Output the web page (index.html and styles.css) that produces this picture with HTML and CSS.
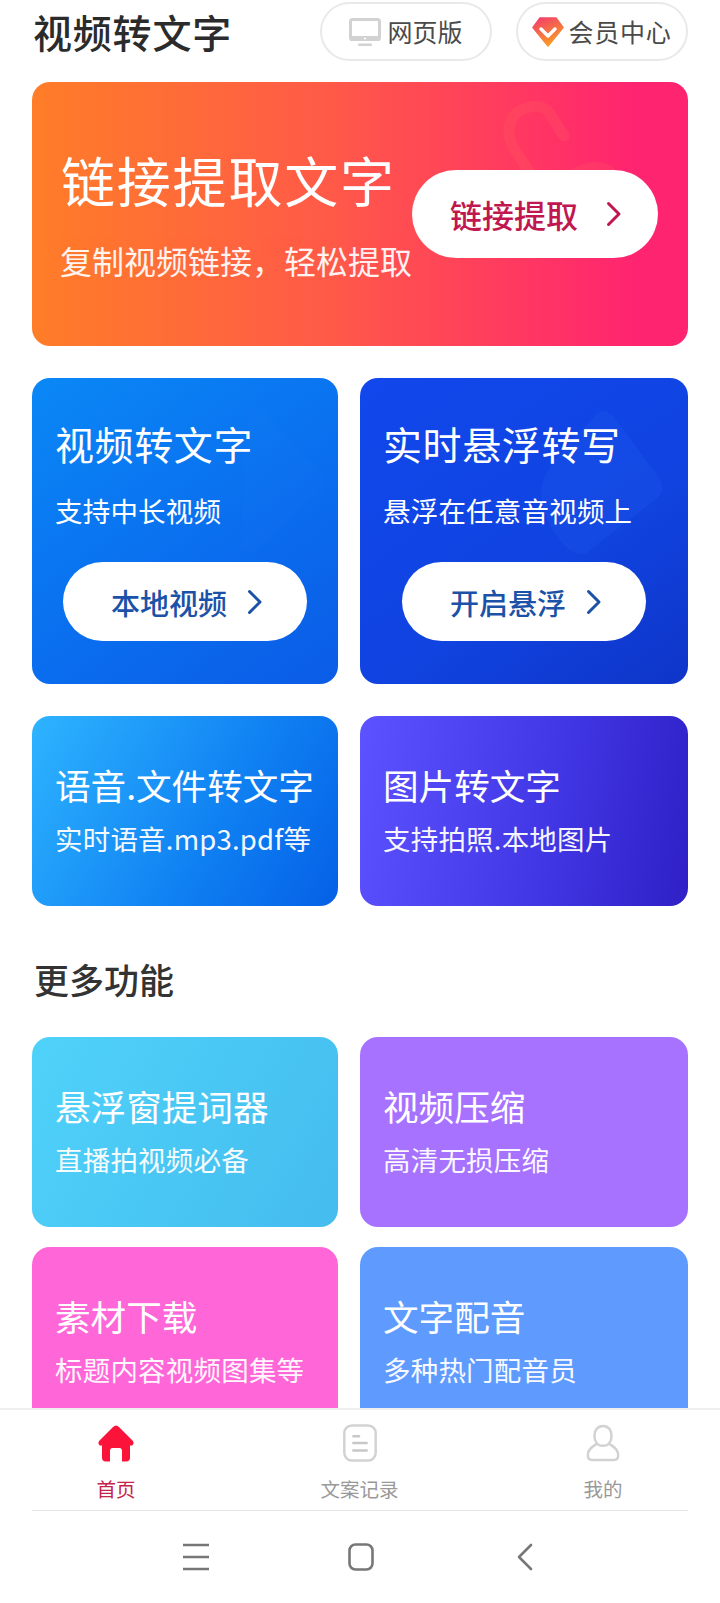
FILE: index.html
```html
<!DOCTYPE html>
<html lang="zh-CN">
<head>
    <meta charset="UTF-8">
    <meta name="viewport" content="width=device-width, initial-scale=1.0">
    <title>视频转文字</title>
    <link rel="stylesheet" href="styles.css">
</head>
<body>
    <div class="app">
        <main class="main">
            <header class="top">
                <h1 class="top-title">视频转文字</h1>
                <div class="top-actions">
                    <div class="top-pill">
                        <svg class="icon-pc" viewBox="0 0 32 28">
                            <rect x="1.5" y="1.5" width="29" height="20" rx="2" fill="#fff" stroke="#d2d2d2" stroke-width="3"/>
                            <rect x="1" y="18" width="30" height="5" rx="1" fill="#d2d2d2"/>
                            <circle cx="16" cy="20.5" r="1.1" fill="#fff"/>
                            <rect x="9" y="25.5" width="14" height="2.5" rx="1" fill="#d2d2d2"/>
                        </svg>
                        <span>网页版</span>
                    </div>
                    <div class="top-pill top-pill-vip">
                        <svg class="icon-vip" viewBox="0 0 32 30">
                            <defs>
                                <linearGradient id="vipFill" x1="0" y1="0" x2="0.5" y2="1">
                                    <stop offset="0" stop-color="#f2386f"/>
                                    <stop offset="1" stop-color="#f99a25"/>
                                </linearGradient>
                            </defs>
                            <path d="M8 1H24L31 10.5 16 29 1 10.5Z" fill="url(#vipFill)" stroke="url(#vipFill)" stroke-width="1.5" stroke-linejoin="round"/>
                            <path d="M9 12L16 19 23 12" fill="none" stroke="#fff" stroke-width="3.4" stroke-linecap="round" stroke-linejoin="round"/>
                        </svg>
                        <span>会员中心</span>
                    </div>
                </div>
            </header>

            <section class="hero">
                <svg class="hero-mark" viewBox="0 0 130 110">
                    <path d="M62 38L48 16C40 4 20 8 12 18C4 28 6 42 14 54L34 84M70 78C84 68 100 66 110 76C118 84 122 94 118 110" fill="none" stroke="#ff8a5a" stroke-opacity="0.12" stroke-width="11" stroke-linecap="round"/>
                </svg>
                <div class="hero-text">
                    <h2 class="hero-title">链接提取文字</h2>
                    <p class="hero-sub">复制视频链接，轻松提取</p>
                </div>
                <div class="pill hero-pill">
                    <span>链接提取</span>
                    <svg class="chevron" viewBox="0 0 16 26"><path d="M2.5 2.5L13 13 2.5 23.5" fill="none" stroke="currentColor" stroke-width="3" stroke-linecap="round" stroke-linejoin="round"/></svg>
                </div>
            </section>

            <section class="grid grid-main">
                <div class="card card-tall card-blue">
                    <svg class="card-mark mark-left" viewBox="0 0 90 150"><path d="M10 8C14 0 24 2 30 10L84 70C90 78 88 86 80 92L20 146C12 152 4 148 4 138Z" fill="#3d8dff" fill-opacity="0.05"/></svg>
                    <h3 class="tall-title">视频转文字</h3>
                    <p class="tall-sub">支持中长视频</p>
                    <div class="pill card-pill">
                        <span>本地视频</span>
                        <svg class="chevron" viewBox="0 0 16 26"><path d="M2.5 2.5L13 13 2.5 23.5" fill="none" stroke="currentColor" stroke-width="3" stroke-linecap="round" stroke-linejoin="round"/></svg>
                    </div>
                </div>
                <div class="card card-tall card-navy">
                    <svg class="card-mark mark-right" viewBox="0 0 130 150"><path d="M60 8C64 0 74 2 80 10L124 70C130 78 128 86 120 92L50 146C30 150 6 110 6 84C6 60 40 30 60 8Z" fill="#3d7bff" fill-opacity="0.1"/></svg>
                    <h3 class="tall-title">实时悬浮转写</h3>
                    <p class="tall-sub">悬浮在任意音视频上</p>
                    <div class="pill card-pill">
                        <span>开启悬浮</span>
                        <svg class="chevron" viewBox="0 0 16 26"><path d="M2.5 2.5L13 13 2.5 23.5" fill="none" stroke="currentColor" stroke-width="3" stroke-linecap="round" stroke-linejoin="round"/></svg>
                    </div>
                </div>
                <div class="card card-small card-sky">
                    <h3 class="small-title">语音.文件转文字</h3>
                    <p class="small-sub">实时语音.mp3.pdf等</p>
                </div>
                <div class="card card-small card-indigo">
                    <h3 class="small-title">图片转文字</h3>
                    <p class="small-sub">支持拍照.本地图片</p>
                </div>
            </section>

            <h2 class="more-title">更多功能</h2>

            <section class="grid grid-more">
                <div class="card card-small card-cyan">
                    <h3 class="small-title">悬浮窗提词器</h3>
                    <p class="small-sub">直播拍视频必备</p>
                </div>
                <div class="card card-small card-purple">
                    <h3 class="small-title">视频压缩</h3>
                    <p class="small-sub">高清无损压缩</p>
                </div>
                <div class="card card-small card-pink">
                    <h3 class="small-title">素材下载</h3>
                    <p class="small-sub">标题内容视频图集等</p>
                </div>
                <div class="card card-small card-periwinkle">
                    <h3 class="small-title">文字配音</h3>
                    <p class="small-sub">多种热门配音员</p>
                </div>
            </section>
        </main>

        <nav class="tabs">
            <div class="tab tab-active">
                <svg class="tab-icon" viewBox="0 0 36 38">
                    <path d="M18 1.5C19 1.5 20 2 21 3L34.5 16.5C36.5 18.5 35.5 21.5 33 21.5H32V34C32 36 30.5 37.5 28.5 37.5H24V27C24 25 23 24 21.5 24H14.5C13 24 12 25 12 27V37.5H7.5C5.5 37.5 4 36 4 34V21.5H3C0.5 21.5 -0.5 18.5 1.5 16.5L15 3C16 2 17 1.5 18 1.5Z" fill="#fb1339"/>
                </svg>
                <span>首页</span>
            </div>
            <div class="tab">
                <svg class="tab-icon" viewBox="0 0 36 40">
                    <rect x="1.5" y="1.5" width="33" height="37" rx="8" fill="none" stroke="#d2d2d2" stroke-width="2.6"/>
                    <path d="M11 13H17M11 20H25M11 28H25" fill="none" stroke="#c8c8c8" stroke-width="2.6" stroke-linecap="round"/>
                </svg>
                <span>文案记录</span>
            </div>
            <div class="tab">
                <svg class="tab-icon" viewBox="0 0 36 40">
                    <path d="M18 2C24 2 27 7 27 12C27 18 24 23 18 23C12 23 9 18 9 12C9 7 12 2 18 2Z" fill="none" stroke="#d2d2d2" stroke-width="2.6"/>
                    <path d="M11.5 21C6 24 2 28 2 33C2 36 3.5 38 6.5 38H29.5C32.5 38 34 36 34 33C34 28 30 24 24.5 21" fill="none" stroke="#d2d2d2" stroke-width="2.6" stroke-linecap="round"/>
                </svg>
                <span>我的</span>
            </div>
        </nav>

        <div class="sysbar">
            <div class="sysbar-inner">
                <svg class="sys-menu" viewBox="0 0 28 28"><path d="M1 2H27M1 14H27M1 26H27" fill="none" stroke="#777" stroke-width="2.6"/></svg>
                <svg class="sys-home" viewBox="0 0 26 28"><rect x="1.5" y="1.5" width="23" height="25" rx="6" fill="none" stroke="#777" stroke-width="2.6"/></svg>
                <svg class="sys-back" viewBox="0 0 16 28"><path d="M14 2L2 14 14 26" fill="none" stroke="#777" stroke-width="2.6" stroke-linecap="round" stroke-linejoin="round"/></svg>
            </div>
        </div>
    </div>
</body>
</html>
```

FILE: styles.css
```css
* {
    box-sizing: border-box;
}

body {
    margin: 0;
    background-color: #fff;
    font-family: "Noto Sans CJK SC", "Noto Sans", sans-serif;
    color: #333;
}

h1, h2, h3, p {
    margin: 0;
    font-weight: 400;
}

.app {
    width: 720px;
    height: 1603px;
    display: flex;
    flex-direction: column;
    overflow: hidden;
}

.main {
    height: 1408px;
    padding: 0 32px;
    overflow: hidden;
    flex-shrink: 0;
}

/* top row */
.top {
    height: 64px;
    display: flex;
    justify-content: space-between;
}

.top-title {
    font-size: 39px;
    line-height: 62px;
    font-weight: 500;
    letter-spacing: 0.8px;
    color: #2b2b2b;
    margin-left: 1px;
}

.top-actions {
    display: flex;
    gap: 24px;
    padding-top: 2px;
}

.top-pill {
    width: 172px;
    height: 59px;
    border: 2px solid #e9e9e9;
    border-radius: 30px;
    display: flex;
    align-items: center;
    justify-content: center;
    gap: 6px;
    font-size: 25px;
    line-height: 34px;
    color: #4a4a4a;
}

.top-pill span {
    margin-top: -2px;
}

.top-pill-vip {
    gap: 4px;
    letter-spacing: 0.8px;
}

.icon-pc {
    width: 32px;
    height: 28px;
}

.icon-vip {
    width: 32px;
    height: 30px;
}

/* shared pill button */
.pill {
    background: #fff;
    border-radius: 45px;
    display: flex;
    align-items: center;
    justify-content: center;
    font-weight: 500;
}

.chevron {
    width: 16px;
    height: 26px;
}

/* orange banner */
.hero {
    position: relative;
    height: 264px;
    margin-top: 18px;
    padding: 0 30px 0 28px;
    border-radius: 18px;
    background: linear-gradient(90deg, #ff7d28 0%, #ff5a48 45%, #ff2470 92%);
    display: flex;
    justify-content: space-between;
    align-items: center;
    color: #fff;
    overflow: hidden;
}

.hero-mark {
    position: absolute;
    left: 470px;
    top: 16px;
    width: 130px;
    height: 110px;
}

.hero-text {
    position: relative;
    align-self: flex-start;
    padding-top: 63px;
    white-space: nowrap;
}

.hero-title {
    font-size: 54px;
    line-height: 70px;
    letter-spacing: 1.8px;
    margin-left: 1px;
}

.hero-sub {
    font-size: 32px;
    line-height: 40px;
    margin-top: 25px;
    opacity: 0.92;
}

.hero-pill {
    position: relative;
    width: 246px;
    height: 88px;
    gap: 28px;
    padding-left: 2px;
    font-size: 32px;
    color: #c0174f;
    flex-shrink: 0;
}

/* card grids */
.grid {
    display: grid;
    grid-template-columns: 306px 328px;
    column-gap: 22px;
}

.grid-main {
    margin-top: 32px;
    row-gap: 32px;
}

.grid-more {
    row-gap: 20px;
}

.more-title {
    height: 131px;
    padding-top: 48px;
    font-size: 35px;
    line-height: 50px;
    font-weight: 500;
    color: #333;
    margin-left: 2px;
}

.card {
    position: relative;
    border-radius: 18px;
    color: #fff;
    overflow: hidden;
    padding-left: 23px;
}

.card-tall {
    height: 306px;
    padding-top: 40px;
    display: flex;
    flex-direction: column;
}

.card-small {
    height: 190px;
    padding-top: 46px;
}

.card-mark {
    position: absolute;
}

.mark-left {
    left: 205px;
    top: 25px;
    width: 90px;
    height: 150px;
}

.mark-right {
    left: 175px;
    top: 30px;
    width: 130px;
    height: 150px;
}

.tall-title {
    position: relative;
    font-size: 39px;
    line-height: 50px;
    letter-spacing: 0.6px;
}

.tall-sub {
    position: relative;
    font-size: 27.5px;
    line-height: 36px;
    letter-spacing: 0.2px;
    margin-top: 24px;
}

.card-pill {
    position: relative;
    width: 244px;
    height: 79px;
    margin-top: 34px;
    margin-left: -23px;
    align-self: center;
    gap: 20px;
    padding-left: 4px;
    font-size: 29px;
    color: #1b52a8;
}

.small-title {
    font-size: 35.6px;
    line-height: 46px;
}

.small-sub {
    font-size: 27.5px;
    line-height: 36px;
    letter-spacing: 0.2px;
    margin-top: 12px;
    opacity: 0.95;
}

.card-blue {
    background: linear-gradient(145deg, #0a88f6 0%, #0a6cee 60%, #0b5ce6 100%);
}

.card-navy {
    background: linear-gradient(145deg, #1147ec 0%, #1043e0 60%, #0f35c8 100%);
}

.card-sky {
    background: linear-gradient(120deg, #2eb4ff 0%, #0f80f2 60%, #0560e6 100%);
}

.card-indigo {
    background: linear-gradient(100deg, #5c52ff 0%, #4238e6 55%, #2f20c6 100%);
}

.card-cyan {
    background: linear-gradient(120deg, #4fd2fa 0%, #44bcee 100%);
}

.card-purple {
    background-color: #a672ff;
}

.card-pink {
    background-color: #ff66d8;
}

.card-periwinkle {
    background-color: #5f9bff;
}

/* bottom tabs */
.tabs {
    height: 102px;
    border-top: 2px solid #f0f0f0;
    padding: 0 77px 0 76px;
    display: flex;
    justify-content: space-between;
    background: #fff;
    flex-shrink: 0;
}

.tab {
    width: 80px;
    padding-top: 14px;
    display: flex;
    flex-direction: column;
    align-items: center;
    font-size: 19.5px;
    line-height: 28px;
    color: #999;
    white-space: nowrap;
}

.tab-active {
    color: #c2244c;
}

.tab-icon {
    width: 36px;
    height: 38px;
    margin-bottom: 13px;
}

/* system buttons */
.sysbar {
    flex: 1;
    margin: 0 32px;
    border-top: 1px solid #e6e6e6;
    padding-top: 32px;
}

.sysbar-inner {
    display: flex;
    align-items: center;
    padding-left: 150px;
    height: 28px;
}

.sys-menu {
    width: 28px;
    height: 28px;
}

.sys-home {
    width: 26px;
    height: 28px;
    margin-left: 138px;
}

.sys-back {
    width: 16px;
    height: 28px;
    margin-left: 143px;
}
```
